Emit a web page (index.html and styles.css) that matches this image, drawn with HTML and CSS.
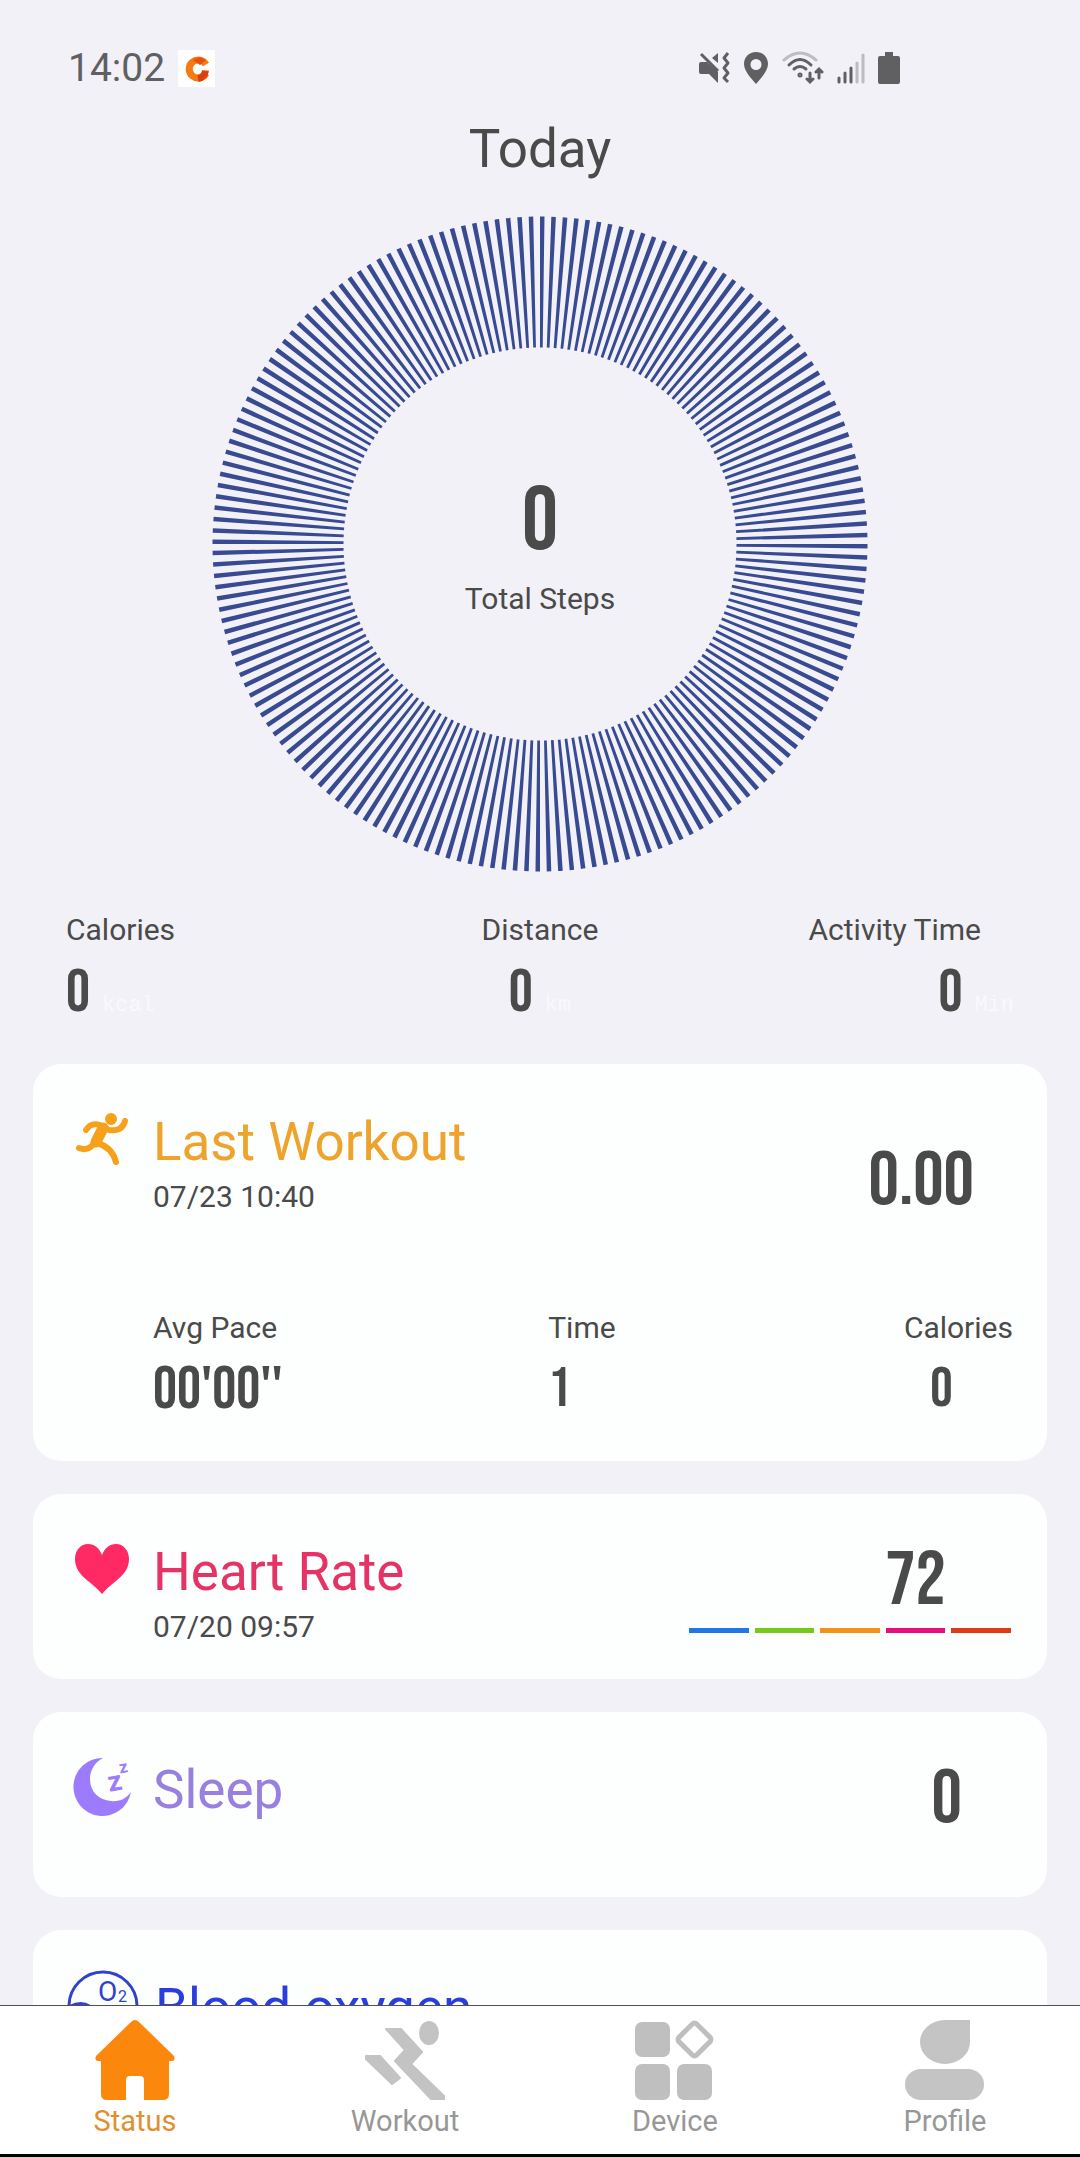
FILE: index.html
```html
<!DOCTYPE html>
<html lang="en">
<head>
  <meta charset="UTF-8" />
  <meta name="viewport" content="width=device-width, initial-scale=1.0" />
  <title>Today</title>
  <link rel="stylesheet" href="styles.css">
</head>
<body>
  <div class="status-bar">
    <span class="clock">14:02</span>
    <svg class="app-badge" viewBox="0 0 37 37" aria-hidden="true">
      <rect width="37" height="37" fill="#fff"/>
      <path d="M28 14.500A9 9 0 1 0 28 23.500" fill="none" stroke="#f47a12" stroke-width="7"/>
      <path d="M20 28.500A9 9 0 0 0 27.500 20.500" fill="none" stroke="#dd3f0c" stroke-width="7"/>
      <path d="M15 10l7-3 6 3-6 5z" fill="#e8500c"/>
    </svg>
    <div class="status-icons">
      <svg width="32" height="34" viewBox="0 0 32 34" aria-hidden="true">
        <path d="M3 11h6l11 10v11l-9-9H3q-2 0-2-2v-8q0-2 2-2z" fill="#606063"/>
        <path d="M3 3l17 17" stroke="#606063" stroke-width="3"/>
        <path d="M20 2v10l-6-5z" fill="#606063"/>
        <path d="M30 2l-4 5 4 5-4 5 4 5-4 5 4 4" fill="none" stroke="#606063" stroke-width="3" stroke-linejoin="round"/>
      </svg>
      <svg width="26" height="34" viewBox="0 0 26 34" aria-hidden="true">
        <path fill-rule="evenodd" d="M13 1C6 1 1 6 1 13c0 7 7 14 12 20 5-6 12-13 12-20C25 6 20 1 13 1zm0 7a5.500 5.500 0 1 1 0 11 5.500 5.500 0 0 1 0-11z" fill="#606063"/>
      </svg>
      <svg width="42" height="34" viewBox="0 0 42 34" fill="none" stroke="#606063" stroke-width="3" stroke-linecap="round" aria-hidden="true">
        <path d="M2 9Q18-5 34 9" stroke="#bcbcc1"/>
        <path d="M7 14Q18 3 29 14"/>
        <path d="M12 18Q18 13 24 18"/>
        <circle cx="18" cy="24" r="1"/>
        <path d="M28 22v8M25 28l3 3 3-3M37 27v-8M34 21l3-3 3 3"/>
      </svg>
      <svg width="28" height="34" viewBox="0 0 28 34" stroke-width="3" stroke-linecap="round" aria-hidden="true">
        <path d="M2 27v4M8 22v9M14 17v14" stroke="#606063"/>
        <path d="M20 12v19M26 4v27" stroke="#bcbcc1"/>
      </svg>
      <svg width="22" height="34" viewBox="0 0 22 34" aria-hidden="true">
        <path d="M7 1h8v4h5q2 0 2 2v24q0 2-2 2H2q-2 0-2-2V7q0-2 2-2h5z" fill="#606063"/>
      </svg>
    </div>
  </div>

  <main class="content">
    <h1 class="page-title">Today</h1>

    <!-- Step ring: 180 wedge ticks -->
    <div class="ring">
      <svg class="ring-ticks" viewBox="0 0 656 656" aria-hidden="true">
        <circle cx="328" cy="328" r="262" pathLength="1800"/>
      </svg>
      <div class="ring-text">
        <span class="number number-xl">0</span>
        <span class="label">Total Steps</span>
      </div>
    </div>

    <section class="totals">
      <div class="total">
        <span class="label">Calories</span>
        <span class="total-value"><span class="number">0</span><span class="unit">kcal</span></span>
      </div>
      <div class="total total-center">
        <span class="label">Distance</span>
        <span class="total-value"><span class="number">0</span><span class="unit">km</span></span>
      </div>
      <div class="total total-right">
        <span class="label">Activity Time</span>
        <span class="total-value"><span class="number">0</span><span class="unit">Min</span></span>
      </div>
    </section>

    <section class="card card-workout">
      <div class="card-head">
        <div class="card-icon">
          <svg width="52" height="54" viewBox="0 0 52 54" fill="none" stroke="#f7a11b" stroke-linecap="round" stroke-linejoin="round" aria-hidden="true">
            <circle cx="35" cy="7" r="6" fill="#f7a11b" stroke="none"/>
            <path d="M10 18Q15 10 24 13L33 18Q46 20 49 9" stroke-width="6"/>
            <path d="M27 16L20 30" stroke-width="11"/>
            <path d="M20 29Q13 40 3 36" stroke-width="6"/>
            <path d="M21 31Q36 35 40 50" stroke-width="6"/>
          </svg>
        </div>
        <div class="card-text">
          <h2>Last Workout</h2>
          <span class="label">07/23 10:40</span>
        </div>
        <span class="number number-lg">0.00</span>
      </div>
      <div class="details">
        <div class="detail">
          <span class="label">Avg Pace</span>
          <span class="number">00'00''</span>
        </div>
        <div class="detail">
          <span class="label">Time</span>
          <span class="number number-sm">1</span>
        </div>
        <div class="detail detail-center">
          <span class="label">Calories</span>
          <span class="number number-sm">0</span>
        </div>
      </div>
    </section>

    <section class="card card-heart">
      <div class="card-head">
        <div class="card-icon">
          <svg width="56" height="52" viewBox="0 0 56 52" aria-hidden="true">
            <path d="M28 51Q23 45 14 38C5 31 1 24 1 16 1 7 7 1 14 1c7 0 11 4 14 11C31 5 35 1 42 1c7 0 13 6 13 15 0 8-4 15-13 22Q33 45 28 51z" fill="#ff2a63"/>
          </svg>
        </div>
        <div class="card-text">
          <h2>Heart Rate</h2>
          <span class="label">07/20 09:57</span>
        </div>
        <div class="heart-value">
          <span class="number number-lg">72</span>
          <div class="zones">
            <i class="zone zone-1"></i><i class="zone zone-2"></i><i class="zone zone-3"></i><i class="zone zone-4"></i><i class="zone zone-5"></i>
          </div>
        </div>
      </div>
    </section>

    <section class="card card-sleep">
      <div class="card-head">
        <div class="card-icon">
          <svg width="58" height="58" viewBox="0 0 58 58" fill="#9c7bfc" aria-hidden="true">
            <path d="M30 0A29 29 0 1 0 58 34C53 41 46 44 38 43 26 42 17 34 17 21 17 12 22 4 30 0z"/>
            <text class="zed" x="35" y="33" font-size="28" transform="rotate(-10 40 26)">z</text>
            <text class="zed" x="46" y="15" font-size="17" transform="rotate(-10 50 10)">z</text>
          </svg>
        </div>
        <div class="card-text">
          <h2>Sleep</h2>
        </div>
        <span class="number number-lg">0</span>
      </div>
    </section>

    <section class="card card-oxygen">
      <div class="card-head">
        <div class="card-icon">
          <svg width="72" height="72" viewBox="0 0 72 72" aria-hidden="true">
            <circle cx="36" cy="36" r="34" fill="none" stroke="#2f41cf" stroke-width="3"/>
            <path d="M2 37Q14 30 24 37T46 44 70 40" fill="none" stroke="#2f41cf" stroke-width="3"/>
            <text class="o2" x="31" y="31" font-size="28">O</text>
            <text class="o2" x="51" y="32" font-size="16">2</text>
          </svg>
        </div>
        <div class="card-text">
          <h2>Blood oxygen</h2>
        </div>
      </div>
    </section>
  </main>

  <nav class="tabs">
    <a class="tab tab-active" href="#status">
      <svg width="80" height="80" viewBox="0 0 80 80" aria-hidden="true">
        <path d="M36 2q4-4 8 0l35 34q2 5-3 5h-2v33q0 6-6 6H49V60q0-4-4-4H35q-4 0-4 4v20H12q-6 0-6-6V41H4q-5 0-3-5z" fill="#fb880d"/>
      </svg>
      Status
    </a>
    <a class="tab" href="#workout">
      <svg width="80" height="80" viewBox="0 0 80 80" fill="#c3c3c3" stroke="#c3c3c3" stroke-width="2" stroke-linejoin="round" aria-hidden="true">
        <ellipse cx="64" cy="13" rx="9" ry="11"/>
        <path d="M21 9h15l21 23-11 12 33 32v3H66L30 41l10-11z"/>
        <path d="M1 36h14l20 22-8 6L1 39z"/>
      </svg>
      Workout
    </a>
    <a class="tab" href="#device">
      <svg width="80" height="80" viewBox="0 0 80 80" fill="#bfbfbf" aria-hidden="true">
        <rect x="0" y="2" width="35" height="35" rx="7"/>
        <rect x="0" y="44" width="35" height="36" rx="7"/>
        <rect x="42" y="44" width="35" height="36" rx="7"/>
        <rect x="47" y="7" width="25" height="25" rx="3" transform="rotate(45 59.500 19.500)" fill="none" stroke="#bfbfbf" stroke-width="5"/>
      </svg>
      Device
    </a>
    <a class="tab" href="#profile">
      <svg width="80" height="80" viewBox="0 0 80 80" fill="#c4c4c4" aria-hidden="true">
        <path d="M40 0h25v22a25 22 0 1 1-25-22z"/>
        <rect x="0" y="49" width="79" height="31" rx="16"/>
      </svg>
      Profile
    </a>
  </nav>
</body>
</html>
```
FILE: styles.css
```css
* {
  box-sizing: border-box;
}

body {
  margin: 0;
  height: 100vh;
  display: flex;
  flex-direction: column;
  background-color: #f2f1f7;
  color: #4a4a4a;
  font-family: Roboto, sans-serif;
  font-size: 30px;
  line-height: 36px;
}

h1,
h2 {
  margin: 0;
  font-size: 53px;
  font-weight: 400;
  line-height: 64px;
}

/* Phone status bar */
.status-bar {
  display: flex;
  align-items: center;
  padding: 48px 180px 0 68px;
}

.clock {
  font-size: 39px;
  line-height: 40px;
  color: #606063;
}

.app-badge {
  width: 37px;
  height: 37px;
  margin-left: 13px;
}

.status-icons {
  display: flex;
  gap: 13px;
  margin-left: auto;
}

.content {
  flex: 1;
  min-height: 0;
  padding: 29px 33px;
  overflow-y: auto;
  scrollbar-width: none;
}

.page-title {
  text-align: center;
}

.label,
.number {
  display: block;
}

.number {
  font-family: "Bebas Neue", "Roboto Condensed", "Liberation Sans Narrow", Roboto, sans-serif;
  font-size: 60px;
  font-weight: 400;
  line-height: 60px;
}

.number-sm {
  font-size: 56px;
}

.number-lg {
  font-size: 76px;
}

.number-xl {
  font-size: 90px;
  line-height: 90px;
}

/* Step ring */
.ring {
  display: grid;
  width: 656px;
  max-width: 100%;
  margin: 35px auto 40px;
}

.ring-ticks,
.ring-text {
  grid-area: 1 / 1;
}

.ring-ticks circle {
  fill: none;
  stroke: #384a92;
  stroke-width: 131;
  stroke-dasharray: 4 6;
}

.ring-text {
  align-self: center;
  padding-top: 6px;
  text-align: center;
}

.ring-text .label {
  margin-top: 14px;
}

/* Totals under the ring */
.totals {
  display: grid;
  grid-template-columns: 1fr 1fr 1fr;
  padding: 0 33px;
  margin-bottom: 40px;
}

.total {
  display: flex;
  flex-direction: column;
  align-items: flex-start;
  gap: 15px;
}

.total-center {
  align-items: center;
}

.total-right {
  align-items: flex-end;
}

.total-right .label {
  padding-right: 33px;
}

.total-value {
  display: flex;
  align-items: baseline;
  gap: 12px;
}

.unit {
  font-family: "Liberation Mono", monospace;
  font-size: 22px;
  color: #f9f9fd;
}

/* Cards */
.card {
  margin-bottom: 33px;
  padding: 46px 34px 34px;
  border-radius: 28px;
  background-color: #fdfefe;
}

.card-head {
  display: flex;
  gap: 16px;
}

.card-icon {
  display: flex;
  flex: none;
  justify-content: center;
  align-items: center;
  width: 70px;
  height: 58px;
}

.card-text {
  flex: 1;
}

.card-text .label {
  margin-top: 5px;
}

.card-head .number-lg {
  margin-top: 4px;
  line-height: 76px;
}

.card-workout {
  padding-bottom: 41px;
}

.card-workout .card-head .number-lg {
  margin: 34px 39px 0 0;
}

.card-workout h2 {
  color: #eda32c;
}

.details {
  display: grid;
  grid-template-columns: 10fr 9fr auto;
  padding-left: 86px;
  margin-top: 90px;
}

.detail .number {
  margin-top: 14px;
}

.detail-center .number {
  padding-right: 34px;
  text-align: center;
}

.card-heart h2 {
  color: #e53365;
}

.heart-value {
  width: 322px;
  margin-right: 2px;
}

.heart-value .number-lg {
  padding-right: 65px;
  text-align: right;
}

.zones {
  display: flex;
  gap: 6px;
  margin-top: 8px;
}

.zone {
  flex: 1;
  height: 5px;
}

.zone-1 {
  background-color: #2277e6;
}

.zone-2 {
  background-color: #74cb17;
}

.zone-3 {
  background-color: #f29318;
}

.zone-4 {
  background-color: #e60f80;
}

.zone-5 {
  background-color: #df3a17;
}

.card-sleep {
  min-height: 185px;
}

.card-sleep h2 {
  color: #9880e0;
}

.card-sleep .number-lg {
  margin-right: 51px;
}

.zed {
  font-weight: 700;
}

.card-oxygen .card-icon {
  width: 72px;
  height: 60px;
}

.card-oxygen h2 {
  color: #2a3ee0;
}

.o2 {
  fill: #2f41cf;
}

/* Bottom tabs */
.tabs {
  display: flex;
  padding: 14px 0 15px;
  border-top: 1px solid #4f4f55;
  border-bottom: 3px solid #000;
  background-color: #fff;
}

.tab {
  flex: 1;
  display: flex;
  flex-direction: column;
  align-items: center;
  gap: 3px;
  color: #979797;
  font-size: 29px;
  text-decoration: none;
}

.tab-active {
  color: #e0902f;
}
```
